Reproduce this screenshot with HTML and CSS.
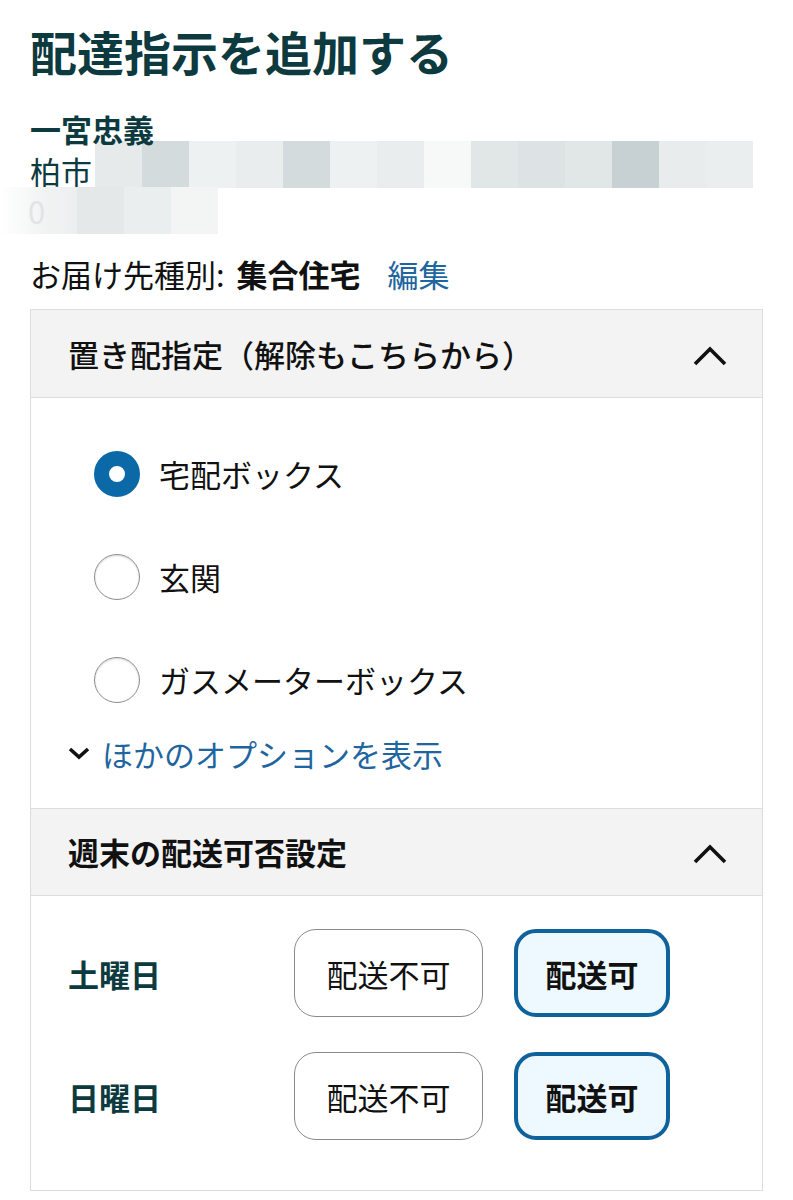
FILE: index.html
```html
<!DOCTYPE html>
<html lang="ja">
<head>
<meta charset="utf-8">
<title>配達指示を追加する</title>
<link rel="stylesheet" href="styles.css">
</head>
<body>
<div class="page">
  <h1 class="title">配達指示を追加する</h1>
  <div class="address">
    <div class="name">一宮忠義</div>
    <div class="addr-line">
      <span class="addr-text">柏市</span>
      <span class="mosaic">
        <span class="cell c-a"></span><span class="cell c-b"></span><span class="cell c-c"></span><span class="cell c-c2"></span><span class="cell c-b"></span><span class="cell c-c"></span><span class="cell c-c2"></span><span class="cell c-w"></span><span class="cell c-d"></span><span class="cell c-d2"></span><span class="cell c-d"></span><span class="cell c-e"></span><span class="cell c-f"></span><span class="cell c-f2"></span>
      </span>
    </div>
    <div class="phone-line">
      <span class="phone-blur"><span class="ghost">0</span></span>
      <span class="cell2 c-g"></span><span class="cell2 c-g2"></span><span class="cell2 c-h"></span>
    </div>
  </div>
  <div class="dest-type">
    <span>お届け先種別:</span>
    <strong class="dest-value">集合住宅</strong>
    <a class="link edit" href="#">編集</a>
  </div>

  <div class="card">
    <div class="section-head">
      <span class="head-text">置き配指定（解除もこちらから）</span>
      <svg class="chev-up" width="36" height="24" viewBox="0 0 36 24"><polyline points="3,20 18,5 33,20" fill="none" stroke="#111" stroke-width="3.6" stroke-linejoin="miter"/></svg>
    </div>
    <div class="section-body options">
      <label class="option">
        <span class="radio checked"></span>
        <span class="opt-text">宅配ボックス</span>
      </label>
      <label class="option">
        <span class="radio"></span>
        <span class="opt-text">玄関</span>
      </label>
      <label class="option">
        <span class="radio"></span>
        <span class="opt-text">ガスメーターボックス</span>
      </label>
      <a class="more link" href="#">
        <svg class="chev-down" width="24" height="16" viewBox="0 0 24 16"><polyline points="3,4 12,12 21,4" fill="none" stroke="#111" stroke-width="3.6"/></svg>
        <span>ほかのオプションを表示</span>
      </a>
    </div>

    <div class="section-head bordered">
      <span class="head-text strong">週末の配送可否設定</span>
      <svg class="chev-up" width="36" height="24" viewBox="0 0 36 24"><polyline points="3,20 18,5 33,20" fill="none" stroke="#111" stroke-width="3.6" stroke-linejoin="miter"/></svg>
    </div>
    <div class="section-body weekend">
      <div class="day-row">
        <span class="day">土曜日</span>
        <button class="btn">配送不可</button>
        <button class="btn selected">配送可</button>
      </div>
      <div class="day-row">
        <span class="day">日曜日</span>
        <button class="btn">配送不可</button>
        <button class="btn selected">配送可</button>
      </div>
    </div>
  </div>
</div>
</body>
</html>
```

FILE: styles.css
```css
* { box-sizing: border-box; }
html, body { margin: 0; padding: 0; background: #fff; }
body {
  font-family: "Noto Sans CJK JP", "Noto Sans", sans-serif;
  color: #111;
  width: 793px;
  overflow: hidden;
}
.page {
  padding: 22px 30px 0 30px;
}
.title {
  margin: 0;
  font-size: 47px;
  line-height: 58px;
  font-weight: 700;
  color: #0d3a3e;
}
.address {
  margin-top: 28px;
  font-size: 31px;
  line-height: 42px;
  color: #0d3a3e;
}
.name { font-weight: 700; position: relative; z-index: 1; }
.addr-line {
  display: flex;
  align-items: center;
  height: 42px;
}
.addr-text { width: 65px; flex: none; }
.mosaic {
  display: flex;
  height: 47px;
  margin-top: -14px;
}
.cell { display: block; width: 47px; height: 47px; }
.c-a { background: #e6eaeb; }
.c-b { background: #d3dbdd; }
.c-c { background: #eef1f1; }
.c-c2 { background: #e9eded; }
.c-w { background: #f7f8f8; }
.c-d { background: #e1e6e7; }
.c-d2 { background: #dde3e4; }
.c-e { background: #c7d1d3; }
.c-f { background: #e8ecec; }
.c-f2 { background: #ebeeee; }
.phone-line {
  display: flex;
  height: 47px;
  margin-left: -30px;
  margin-top: -5px;
}
.phone-blur {
  width: 77px;
  height: 47px;
  background: linear-gradient(90deg, #fff 0%, #f1f3f3 60%, #eceff0 100%);
  color: #dfe3e4;
  font-weight: 400;
  padding-left: 28px;
  line-height: 47px;
}
.ghost { opacity: 0.9; }
.cell2 { display: block; width: 47px; height: 47px; }
.c-g { background: #e4e8e9; }
.c-g2 { background: #eaeeee; }
.c-h { background: #f3f5f5; }

.dest-type {
  margin-top: 19px;
  font-size: 31px;
  line-height: 42px;
  color: #111;
}
.dest-value { font-weight: 700; margin-left: 5px; }
.link { color: #1f65a0; text-decoration: none; }
.edit { margin-left: 20px; }

.card {
  margin-top: 14px;
  border: 1px solid #dddddd;
  width: 733px;
}
.section-head {
  background: #f3f3f3;
  height: 88px;
  display: flex;
  align-items: center;
  justify-content: space-between;
  padding: 0 34px 0 37px;
  border-bottom: 1px solid #dddddd;
}
.section-head.bordered { border-top: 1px solid #dddddd; }
.head-text {
  font-size: 31px;
  font-weight: 500;
  color: #111;
  line-height: 42px;
}
.head-text.strong { font-weight: 700; }
.chev-up { margin-top: 4px; display: block; }

.section-body { padding: 0 37px; }
.options {
  padding-top: 24px;
  padding-bottom: 34px;
}
.option {
  display: flex;
  align-items: center;
  height: 103px;
  padding-left: 26px;
  font-size: 31px;
  color: #111;
}
.radio {
  width: 46px;
  height: 46px;
  border-radius: 50%;
  border: 1.5px solid #8d8d8d;
  background: #fff;
  box-shadow: inset 0 1px 2px rgba(0,0,0,0.15);
  margin-right: 19px;
  flex: none;
}
.radio.checked {
  border: 15px solid #0a69a6;
  box-shadow: none;
  background: #fff;
}
.opt-text { line-height: 42px; }
.more {
  display: flex;
  align-items: center;
  height: 42px;
  margin-top: 1px;
  font-size: 31px;
}
.chev-down { margin-right: 11px; margin-left: -1px; display: block; }

.weekend {
  padding-top: 33px;
  padding-bottom: 50px;
}
.day-row {
  display: flex;
  align-items: center;
  height: 88px;
}
.day-row + .day-row { margin-top: 35px; }
.day {
  width: 226px;
  font-size: 31px;
  font-weight: 700;
  color: #0d3a3e;
}
.btn {
  font-family: "Noto Sans CJK JP", "Noto Sans", sans-serif;
  font-size: 31px;
  height: 88px;
  width: 189px;
  border: 1.5px solid #8a8a8a;
  border-radius: 22px;
  background: #fff;
  color: #111;
  padding: 0;
}
.btn.selected {
  margin-left: 31px;
  width: 156px;
  border: 4px solid #10629b;
  background: #edf8ff;
  font-weight: 700;
}
```
